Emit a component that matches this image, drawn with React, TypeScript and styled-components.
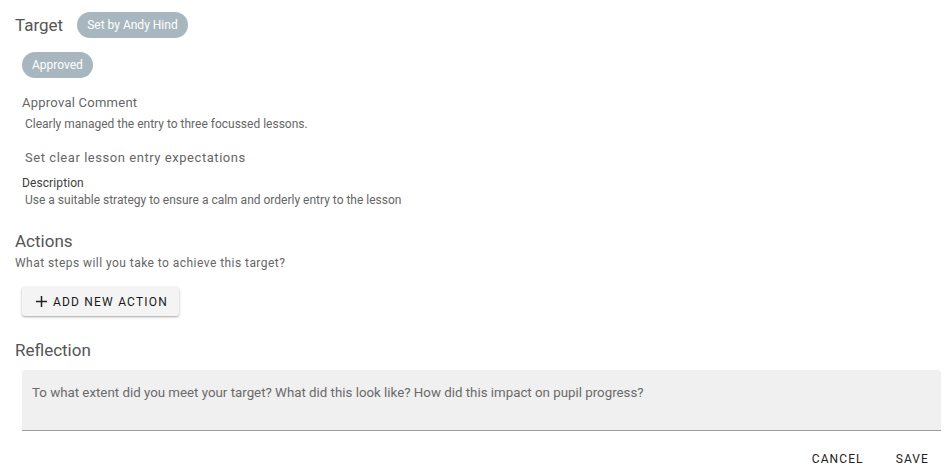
import React from "react";
import styled, { createGlobalStyle } from "styled-components";

const Global = createGlobalStyle`
  html, body { margin: 0; padding: 0; background: #fff; }
  body { font-family: Roboto, "Noto Sans", Arial, sans-serif; }
  * { box-sizing: border-box; }
`;

const Page = styled.div`
  width: 947px;
  height: 472px;
  padding: 0 6px 0 15px;
  display: flex;
  flex-direction: column;
  overflow: hidden;
`;

const HeaderRow = styled.div`
  display: flex;
  align-items: center;
  gap: 14px;
  height: 26px;
  margin-top: 12px;
`;

const SectionTitle = styled.h2<{ $mt?: number }>`
  margin: ${(p) => p.$mt ?? 0}px 0 0 0;
  font-size: 17px;
  font-weight: 400;
  color: #555;
  line-height: 20px;
`;

const Chip = styled.span`
  display: inline-flex;
  align-items: center;
  height: 26px;
  padding: 0 10px;
  border-radius: 13px;
  background: #a8b7bf;
  color: #fff;
  font-size: 12px;
  line-height: 1;
`;

const Indent = styled.div<{ $mt?: number }>`
  padding-left: 7px;
  margin-top: ${(p) => p.$mt ?? 0}px;
  display: flex;
  flex-direction: column;
  align-items: flex-start;
`;

const Label = styled.div<{ $mt?: number }>`
  margin-top: ${(p) => p.$mt ?? 0}px;
  font-size: 13px;
  letter-spacing: 0.25px;
  color: #666;
  line-height: 18px;
`;

const TargetName = styled.div<{ $mt?: number }>`
  margin-top: ${(p) => p.$mt ?? 0}px;
  padding-left: 3px;
  font-size: 13px;
  letter-spacing: 0.55px;
  color: #666;
  line-height: 18px;
`;

const SmallLabel = styled.div<{ $mt?: number }>`
  margin-top: ${(p) => p.$mt ?? 0}px;
  font-size: 12px;
  font-weight: 400;
  letter-spacing: 0.1px;
  color: #3d3d3d;
  line-height: 16px;
`;

const BodyText = styled.div<{ $mt?: number }>`
  margin-top: ${(p) => p.$mt ?? 0}px;
  padding-left: 3px;
  font-size: 12px;
  color: #666;
  line-height: 16px;
`;

const Hint = styled.div`
  margin-top: 5px;
  font-size: 12px;
  letter-spacing: 0.45px;
  color: #666;
  line-height: 14px;
`;

const RaisedButton = styled.button`
  margin-top: 17px;
  margin-left: 7px;
  align-self: flex-start;
  height: 29px;
  width: 157px;
  display: inline-flex;
  align-items: center;
  justify-content: center;
  gap: 5px;
  border: none;
  border-radius: 3px;
  background: #f4f4f4;
  box-shadow: 0 1px 3px rgba(0, 0, 0, 0.25), 0 1px 1px rgba(0, 0, 0, 0.12);
  font-family: Roboto, Arial, sans-serif;
  font-size: 12px;
  font-weight: 400;
  letter-spacing: 1.2px;
  color: #1a1a1a;
  padding: 0 0 0 2px;
`;

const FilledField = styled.div`
  margin: 10px 0 0 7px;
  height: 61px;
  background: #f0f0f0;
  border-radius: 4px 4px 0 0;
  border-bottom: 1px solid #9e9e9e;
  padding: 15px 10px 0 10px;
  font-size: 13.3px;
  color: #6a6a6a;
  line-height: 16px;
`;

const Footer = styled.div`
  display: flex;
  justify-content: flex-end;
  gap: 8px;
  margin-top: 18px;
  padding-right: 0;
`;

const TextButton = styled.button`
  border: none;
  background: transparent;
  font-family: Roboto, Arial, sans-serif;
  font-size: 12px;
  font-weight: 400;
  letter-spacing: 1.1px;
  color: #222;
  padding: 0 12px;
  height: 20px;
`;

function PlusIcon() {
  return (
    <svg width="13" height="13" viewBox="0 0 14 14" aria-hidden>
      <path d="M7 1v12M1 7h12" stroke="#222" strokeWidth="1.6" fill="none" />
    </svg>
  );
}

export default function App() {
  return (
    <>
      <Global />
      <Page>
        <HeaderRow>
          <SectionTitle>Target</SectionTitle>
          <Chip>Set by Andy Hind</Chip>
        </HeaderRow>
        <Indent $mt={14}>
          <Chip>Approved</Chip>
          <Label $mt={16}>Approval Comment</Label>
          <BodyText $mt={4}>Clearly managed the entry to three focussed lessons.</BodyText>
          <TargetName $mt={17}>Set clear lesson entry expectations</TargetName>
          <SmallLabel $mt={8}>Description</SmallLabel>
          <BodyText $mt={1}>Use a suitable strategy to ensure a calm and orderly entry to the lesson</BodyText>
        </Indent>
        <SectionTitle $mt={23}>Actions</SectionTitle>
        <Hint>What steps will you take to achieve this target?</Hint>
        <RaisedButton>
          <PlusIcon />
          ADD NEW ACTION
        </RaisedButton>
        <SectionTitle $mt={24}>Reflection</SectionTitle>
        <FilledField>
          To what extent did you meet your target? What did this look like? How did this impact on pupil progress?
        </FilledField>
        <Footer>
          <TextButton>CANCEL</TextButton>
          <TextButton>SAVE</TextButton>
        </Footer>
      </Page>
    </>
  );
}
